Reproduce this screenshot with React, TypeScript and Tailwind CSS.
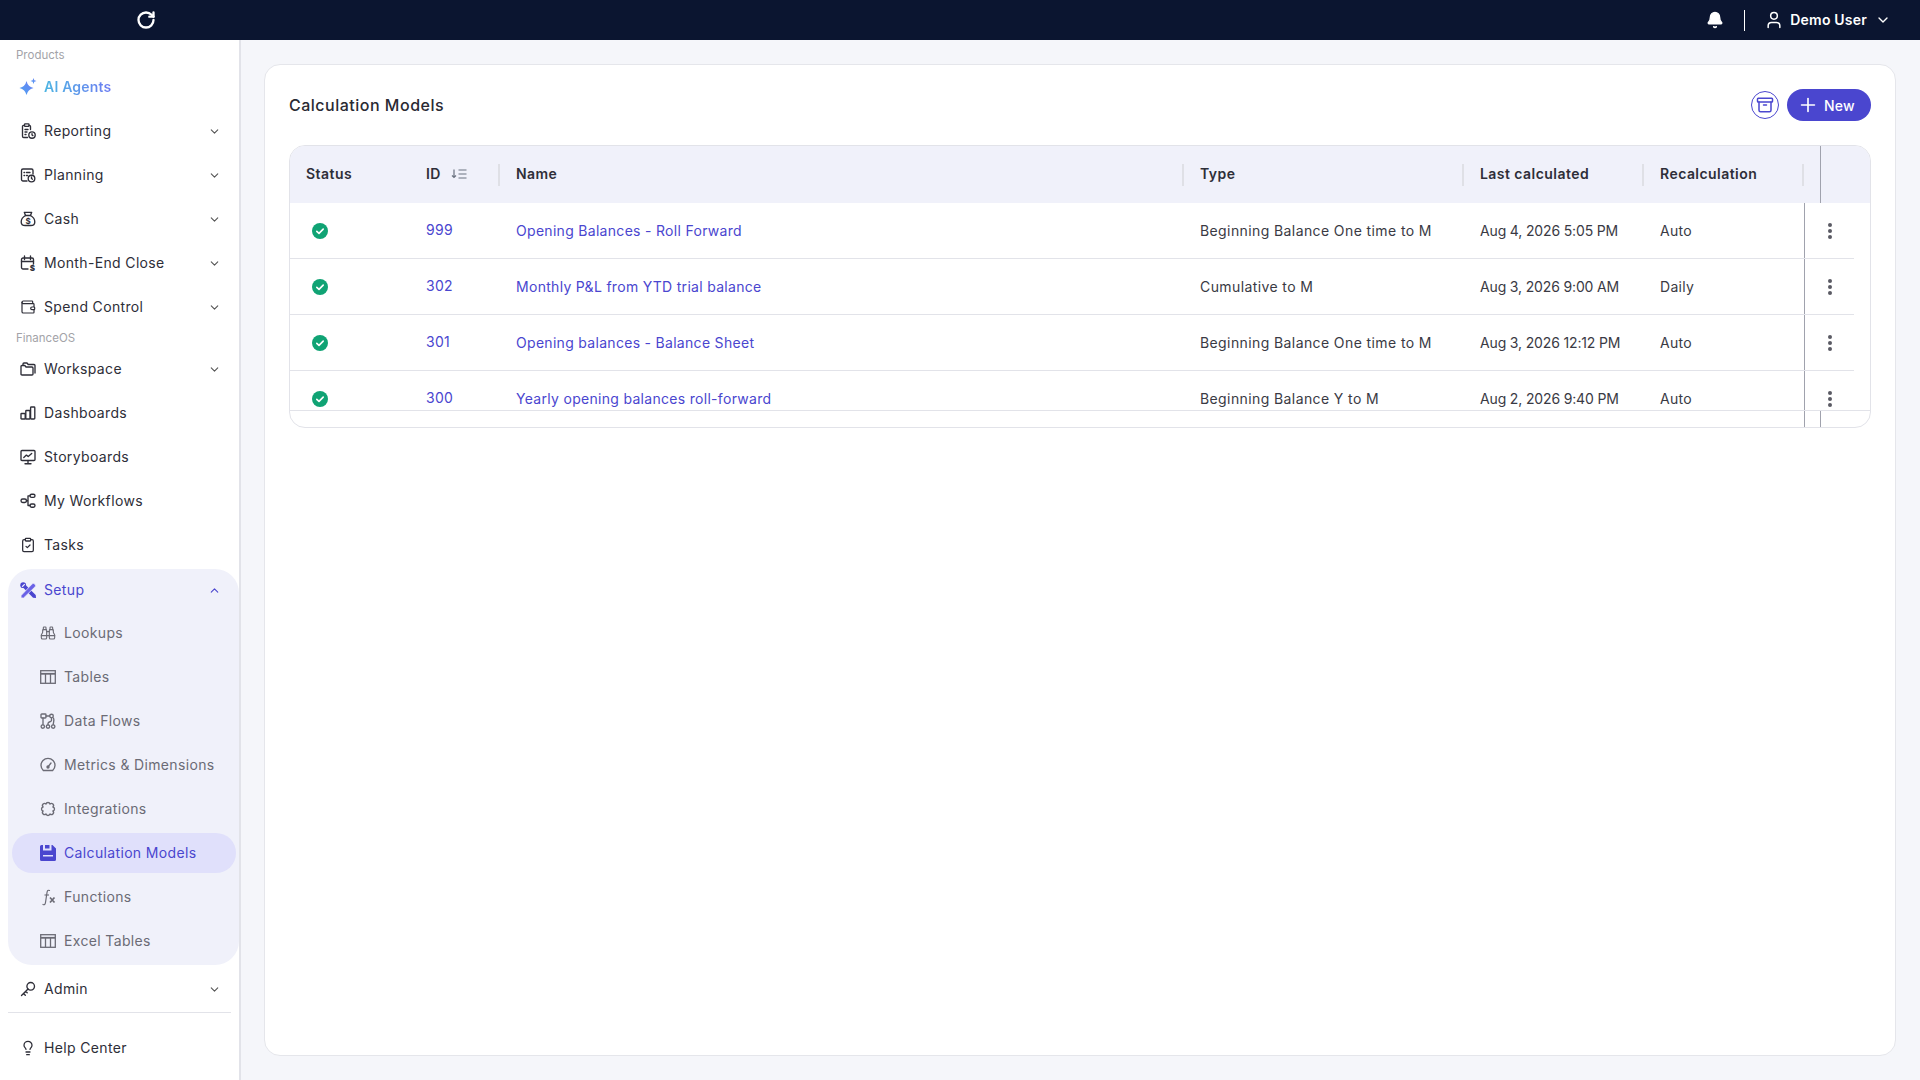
import React from "react";
import { RotateCw, Bell, User, ChevronDown, ChevronUp, Plus, Archive, Binoculars, Lightbulb, Wallet, ClipboardCheck } from "lucide-react";

const S = ({ children, w = 16 }: { children: React.ReactNode; w?: number }) => (
  <svg width={w} height={w} viewBox="0 0 16 16" fill="none" stroke="currentColor" strokeWidth={1.35} strokeLinecap="round" strokeLinejoin="round" className="shrink-0">
    {children}
  </svg>
);

const Sparkle = () => (
  <svg width="18" height="18" viewBox="0 0 18 18" className="shrink-0">
    <defs>
      <linearGradient id="spk" x1="0" y1="1" x2="1" y2="0">
        <stop offset="0" stopColor="#4aa3f0" />
        <stop offset="1" stopColor="#6f7ff5" />
      </linearGradient>
    </defs>
    <path d="M7.500 3 Q8.800 8.700 14.500 10 Q8.800 11.300 7.500 17 Q6.200 11.300 .500 10 Q6.200 8.700 7.500 3Z" fill="url(#spk)" />
    <path d="M14.500 0 L15.300 2.200 L17.500 3 L15.300 3.800 L14.500 6 L13.700 3.800 L11.500 3 L13.700 2.200 Z" fill="url(#spk)" />
  </svg>
);
const Reporting = () => (
  <S><path d="M10.500 6.500V3.500A1.200 1.200 0 0 0 9.300 2.300H9M4.500 2.300H3.700A1.200 1.200 0 0 0 2.500 3.500v9.800a1.200 1.200 0 0 0 1.200 1.200h3.800" /><rect x="4.500" y="0.800" width="4.500" height="2.600" rx="0.700" /><path d="M5 6.500h3M5 9h2M5 11.500h1" /><circle cx="12" cy="12" r="3.200" /><path d="M12 10.700V12l.9.6" /></S>
);
const Planning = () => (
  <S><path d="M7 14H3a1.500 1.500 0 0 1-1.500-1.500v-9A1.500 1.500 0 0 1 3 2h8.500A1.500 1.500 0 0 1 13 3.500V7" /><path d="M4 5.500h.6M6.500 5.500h3.500M4 8.500h.6M6.500 8.500h1" /><circle cx="11.500" cy="11.500" r="3.300" /><path d="M11.500 10v1.500l1 .7" /></S>
);
const Cash = () => (
  <S><path d="M5.500 4.500 4.300 1.300h7.400l-1.200 3.200" /><path d="M5.500 4.500h5c2.500 1.400 4.300 4 4.300 6.400 0 2.400-2 3.600-4 3.600H5.200c-2 0-4-1.200-4-3.600 0-2.400 1.800-5 4.300-6.400Z" /><text x="8" y="12.600" textAnchor="middle" fontSize="8" fontWeight="700" fill="currentColor" stroke="none" fontFamily="Inter">$</text></S>
);
const MonthEnd = () => (
  <S><path d="M8 14H3a1.500 1.500 0 0 1-1.500-1.500v-8A1.500 1.500 0 0 1 3 3h9a1.500 1.500 0 0 1 1.500 1.500V9" /><path d="M1.500 6.500h12M4.500 1v3.500M10.500 1v3.500" /><text x="12.500" y="15.500" textAnchor="middle" fontSize="8" fontWeight="800" fill="currentColor" stroke="none" fontFamily="Inter">$</text></S>
);
const Folder = () => (
  <S><path d="M3 4V3a1 1 0 0 1 1-1h3l1.200 1.500H14a1 1 0 0 1 1 1V12" /><path d="M1 5.500a1 1 0 0 1 1-1h2.800L6 6h6a1 1 0 0 1 1 1v6a1 1 0 0 1-1 1H2a1 1 0 0 1-1-1Z" /></S>
);
const Bars = () => (
  <S><rect x="1" y="8.500" width="4.200" height="5.500" rx="0.600" /><rect x="5.800" y="5.500" width="4.200" height="8.500" rx="0.600" /><rect x="10.600" y="2" width="4.200" height="12" rx="0.800" /></S>
);
const Story = () => (
  <S><rect x="1" y="1.500" width="14" height="10" rx="1" /><path d="M5 14.700h6M8 11.500v3.200M3.800 8.500l2.600-2.400 1.800 1.400 3.500-3" /></S>
);
const Flows = () => (
  <S><rect x="1" y="6" width="5.500" height="3.500" rx="1.700" /><rect x="10" y="1.200" width="5" height="3.200" rx="1.600" /><rect x="10" y="11" width="5" height="3.200" rx="1.600" /><path d="M6.500 7.700H8M8 2.800h2M8 12.500h2M8 2.800v9.700" /></S>
);
const Setup = () => (
  <svg width="17" height="17" viewBox="0 0 16 16" className="shrink-0">
    <path d="M1 3.400 3.400 1l11.400 11.300.3 2.800-2.800-.3Z" fill="#4a46cf" />
    <circle cx="3" cy="3" r="2.700" fill="#4a46cf" />
    <path d="M2 4.500 4.500 2" stroke="#f0f1fa" strokeWidth="1.100" />
    <path d="M1 12.700 11.600 1.700a1.300 1.300 0 0 1 1.800 0l.9.9a1.300 1.300 0 0 1 0 1.800L3.400 15H1Z" fill="#6a62e6" stroke="#f0f1fa" strokeWidth="0.700" />
  </svg>
);
const DataFlows = () => (
  <S><rect x="1" y="1" width="5" height="4" rx="0.800" /><circle cx="11.500" cy="3" r="1.800" /><circle cx="2.800" cy="13.500" r="1.700" /><circle cx="8" cy="13.500" r="1.700" /><circle cx="13.200" cy="13.500" r="1.700" /><path d="M3 5v6.500M6 3h3.500M11.500 5v2.500c0 1.500-3.500 1-3.500 3V12M13.500 5c1 2 0 4-.3 6.500" /></S>
);
const Gauge = () => (
  <S><path d="M3.300 13.500A7 7 0 1 1 12.700 13.500Z" /><path d="M8 9.800 11 6" /><circle cx="8" cy="10" r="1" fill="currentColor" /></S>
);
const Integr = () => (
  <S><path d="M12.900 10A2.050 2.050 0 0 1 10 12.900A2.050 2.050 0 0 1 6 12.900A2.050 2.050 0 0 1 3.100 10A2.050 2.050 0 0 1 3.100 6A2.050 2.050 0 0 1 6 3.100A2.050 2.050 0 0 1 10 3.100A2.050 2.050 0 0 1 12.900 6A2.050 2.050 0 0 1 12.900 10Z" /></S>
);
const Save = () => (
  <svg width="16" height="16" viewBox="0 0 16 16" className="shrink-0" fill="#4a46cf">
    <path fillRule="evenodd" d="M1.500 0H3v5.500h8.500V0h1L16 3.500v11a1.500 1.500 0 0 1-1.500 1.500h-13A1.500 1.500 0 0 1 0 14.500v-13A1.500 1.500 0 0 1 1.500 0Z" />
    <rect x="5" y="0" width="4.500" height="3.500" />
    <rect x="3" y="10" width="10" height="1.500" fill="#e0e0fb" />
  </svg>
);
const Fx = () => (
  <svg width="16" height="17" viewBox="0 0 16 17" fill="none" stroke="currentColor" className="shrink-0">
    <path d="M9.500 1.500C8 .8 7.300 1.500 7 3.500L5.500 13.500c-.3 2-1.200 2.700-2.500 2" strokeWidth="1.200" strokeLinecap="round" />
    <path d="M4.500 6h4.500" strokeWidth="1.100" />
    <path d="M10 8.500l4.500 5M14.500 8.500l-4.500 5" strokeWidth="1.700" />
  </svg>
);
const Tbl = () => (
  <svg width="16" height="14" viewBox="0 0 16 14" fill="none" stroke="currentColor" strokeWidth="1.300" className="shrink-0">
    <rect x="0.700" y="0.700" width="14.600" height="12.600" />
    <path d="M0.700 3.800h14.600" strokeWidth="1.800" />
    <path d="M5.500 4v9M10.500 4v9" />
  </svg>
);
const KeyIcon = () => (
  <S><circle cx="10.700" cy="5.300" r="3.800" /><path d="M8 8 1.500 14.500M3.500 12.500l1.800 1.800M5.700 10.300l1.500 1.500" /></S>
);
const Sort = () => (
  <svg width="16" height="10" viewBox="0 0 16 10" fill="none" stroke="#6b7280" strokeWidth="1" className="shrink-0">
    <path d="M3 .5v8M1 6.500l2 2 2-2" strokeWidth="1.200" />
    <path d="M7.500 1h8M7.500 5h8M7.500 9h8" />
  </svg>
);
const Ok = () => (
  <svg width="16" height="16" viewBox="0 0 16 16" className="shrink-0">
    <circle cx="8" cy="8" r="8" fill="#10a374" />
    <path d="M4.800 8.300l2.200 2.100 4.200-4.300" fill="none" stroke="#fff" strokeWidth="1.600" strokeLinecap="round" strokeLinejoin="round" />
  </svg>
);
const Kebab = () => (
  <svg width="4" height="16" viewBox="0 0 4 16" fill="#5a5a64" className="shrink-0">
    <circle cx="2" cy="2" r="2" />
    <circle cx="2" cy="8" r="2" />
    <circle cx="2" cy="14" r="2" />
  </svg>
);

const font = "font-['Inter','Liberation_Sans',sans-serif]";

function Item({ icon, label, chev }: { icon: React.ReactNode; label: string; chev?: boolean }) {
  return (
    <div className="flex h-[44px] items-center pl-[20px] pr-[18px] text-[#2e2e38]">
      <span className="flex w-[16px] justify-center">{icon}</span>
      <span className="ml-[8px] flex-1 pb-[1px] text-[14px] tracking-[0.35px]">{label}</span>
      {chev && <ChevronDown size={13} className="text-[#555]" />}
    </div>
  );
}
function Sub({ icon, label, active }: { icon: React.ReactNode; label: string; active?: boolean }) {
  return (
    <div className={active ? "my-[2px] ml-[4px] mr-[3px] flex h-[40px] items-center rounded-full bg-[#e0e0fb] pl-[28px] text-[#4a46cf]" : "flex h-[44px] items-center pl-[32px] text-[#6b6b75]"}>
      <span className="flex w-[16px] justify-center">{icon}</span>
      <span className="ml-[8px] pb-[1px] text-[14px] tracking-[0.35px]">{label}</span>
    </div>
  );
}

const cols = "grid grid-cols-[120px_90px_684px_280px_180px_160px_50px]";
const rows = [
  ["999", "Opening Balances - Roll Forward", "Beginning Balance One time to M", "Aug 4, 2026 5:05 PM", "Auto"],
  ["302", "Monthly P&L from YTD trial balance", "Cumulative to M", "Aug 3, 2026 9:00 AM", "Daily"],
  ["301", "Opening balances - Balance Sheet", "Beginning Balance One time to M", "Aug 3, 2026 12:12 PM", "Auto"],
  ["300", "Yearly opening balances roll-forward", "Beginning Balance Y to M", "Aug 2, 2026 9:40 PM", "Auto"],
];

function Head({ label, sep = true, extra }: { label: string; sep?: boolean; extra?: React.ReactNode }) {
  return (
    <div className="flex h-[57px] items-center pl-[16px]">
      <span className="flex flex-1 items-center gap-[10px] pb-[2px] text-[14px] font-semibold tracking-[0.45px] text-[#2e2e38]">{label}{extra}</span>
      {sep && <span className="h-[22px] w-[2px] bg-[#dfe0e6]" />}
    </div>
  );
}

export default function App() {
  return (
    <div className={`${font} flex h-[1080px] w-[1920px] flex-col overflow-hidden bg-[#f5f6fa]`}>
      <header className="flex h-[40px] shrink-0 items-center bg-[#0b1530] pl-[136px] pr-[29px] text-white">
        <RotateCw size={20} strokeWidth={2.800} />
        <div className="flex-1" />
        <Bell size={18} fill="#fff" className="-translate-x-px" />
        <span className="ml-[20px] mr-[18px] h-[21px] w-px -translate-x-px bg-white" />
        <User size={20} strokeWidth={1.800} />
        <span className="ml-[6px] pb-[1px] text-[14px] font-semibold tracking-[0.2px]">Demo User</span>
        <ChevronDown size={16} className="ml-[8px]" />
      </header>
      <div className="flex min-h-0 flex-1">
        <aside className="flex h-full w-[241px] shrink-0 flex-col border-r-2 border-[#e2e3e9] bg-white">
          <div className="flex h-[31px] items-center pl-[16px] pt-[1px] text-[11.500px] text-[#a3a3a8]">Products</div>
          <div className="flex h-[32px] items-center pl-[19px]">
            <Sparkle />
            <span className="ml-[7px] bg-gradient-to-r from-[#4cb5e2] to-[#6b7bf2] bg-clip-text pb-[1px] text-[14px] font-semibold tracking-[0.2px] text-transparent">AI Agents</span>
          </div>
          <div className="mt-[6px]">
            <Item icon={<Reporting />} label="Reporting" chev />
            <Item icon={<Planning />} label="Planning" chev />
            <Item icon={<Cash />} label="Cash" chev />
            <Item icon={<MonthEnd />} label="Month-End Close" chev />
            <Item icon={<Wallet size={18} strokeWidth={1.800} />} label="Spend Control" chev />
          </div>
          <div className="flex h-[18px] items-center pl-[16px] pt-[1px] text-[11.500px] text-[#a3a3a8]">FinanceOS</div>
          <Item icon={<Folder />} label="Workspace" chev />
          <Item icon={<Bars />} label="Dashboards" />
          <Item icon={<Story />} label="Storyboards" />
          <Item icon={<Flows />} label="My Workflows" />
          <Item icon={<ClipboardCheck size={18} strokeWidth={1.900} />} label="Tasks" />
          <div className="ml-[8px] mt-[2px] h-[396px] w-[231px] rounded-[24px] bg-[#f0f1fa]">
            <div className="flex h-[42px] items-center pl-[12px] pr-[18px] text-[#4a46cf]">
              <span className="flex w-[16px] justify-center"><Setup /></span>
              <span className="ml-[8px] flex-1 pb-[1px] text-[14px] tracking-[0.35px]">Setup</span>
              <ChevronUp size={13} />
            </div>
            <Sub icon={<Binoculars size={18} strokeWidth={1.700} />} label="Lookups" />
            <Sub icon={<Tbl />} label="Tables" />
            <Sub icon={<DataFlows />} label="Data Flows" />
            <Sub icon={<Gauge />} label="Metrics & Dimensions" />
            <Sub icon={<Integr />} label="Integrations" />
            <Sub icon={<Save />} label="Calculation Models" active />
            <Sub icon={<Fx />} label="Functions" />
            <Sub icon={<Tbl />} label="Excel Tables" />
          </div>
          <div className="mt-[2px]"><Item icon={<KeyIcon />} label="Admin" chev /></div>
          <div className="ml-[8px] mr-[8px] mt-[1px] h-px bg-[#e2e3e9]" />
          <div className="mt-[13px]"><Item icon={<Lightbulb size={18} strokeWidth={1.900} />} label="Help Center" /></div>
        </aside>
        <main className="min-w-0 flex-1 pb-[24px] pl-[23px] pr-[24px] pt-[24px]">
          <section className="h-full rounded-[16px] border border-[#e5e6eb] bg-white px-[24px]">
            <div className="flex h-[80px] items-center">
              <h1 className="flex-1 pb-[1px] text-[16px] font-medium tracking-[0.5px] text-[#2a2a33]">Calculation Models</h1>
              <span className="flex h-[28px] w-[28px] items-center justify-center rounded-full border border-[#4a46cf] text-[#4a46cf]"><Archive size={18} strokeWidth={2} /></span>
              <button className="ml-[8px] flex h-[32px] w-[84px] items-center rounded-full bg-[#4a46cf] pl-[10px] text-[14px] font-medium tracking-[0.2px] text-white"><Plus size={22} strokeWidth={1.800} className="mr-[5px]" />New</button>
            </div>
            <div className="h-[283px] overflow-hidden rounded-[16px] border border-[#e2e3e9]">
              <div className="flex h-[57px] bg-[#f0f1fa]">
                <div className="grid w-[1564px] shrink-0 grid-cols-[120px_90px_684px_280px_180px_160px]">
                  <Head label="Status" sep={false} />
                  <Head label="ID" extra={<Sort />} />
                  <Head label="Name" />
                  <Head label="Type" />
                  <Head label="Last calculated" />
                  <Head label="Recalculation" />
                </div>
                <span className="-ml-[34px] h-full w-px bg-[#a0a2ad]" />
              </div>
              <div className="h-[208px] overflow-hidden border-b border-[#e2e3e9]">
                <div className="w-[1564px]">
                  {rows.map((r) => (
                    <div key={r[0]} className={`${cols} h-[56px] items-center border-b border-[#e2e3e9] text-[14px] tracking-[0.3px] text-[#3a3a44]`}>
                      <div className="pl-[22px]"><Ok /></div>
                      <div className="pb-[2px] pl-[16px] text-[#4a46cf]">{r[0]}</div>
                      <div className="pl-[16px] text-[#4a46cf]">{r[1]}</div>
                      <div className="pb-[1px] pl-[16px] tracking-[0.4px]">{r[2]}</div>
                      <div className="pb-[1px] pl-[16px] tracking-[-0.15px]">{r[3]}</div>
                      <div className="pb-[1px] pl-[16px]">{r[4]}</div>
                      <div className="flex h-full items-center justify-end border-l border-[#a0a2ad] pr-[22px]"><Kebab /></div>
                    </div>
                  ))}
                </div>
              </div>
              <div className="flex h-[16px]">
                <span className="ml-[1514px] h-full w-px bg-[#a0a2ad]" />
                <span className="ml-[15px] h-full w-px bg-[#a0a2ad]" />
              </div>
            </div>
          </section>
        </main>
      </div>
    </div>
  );
}
